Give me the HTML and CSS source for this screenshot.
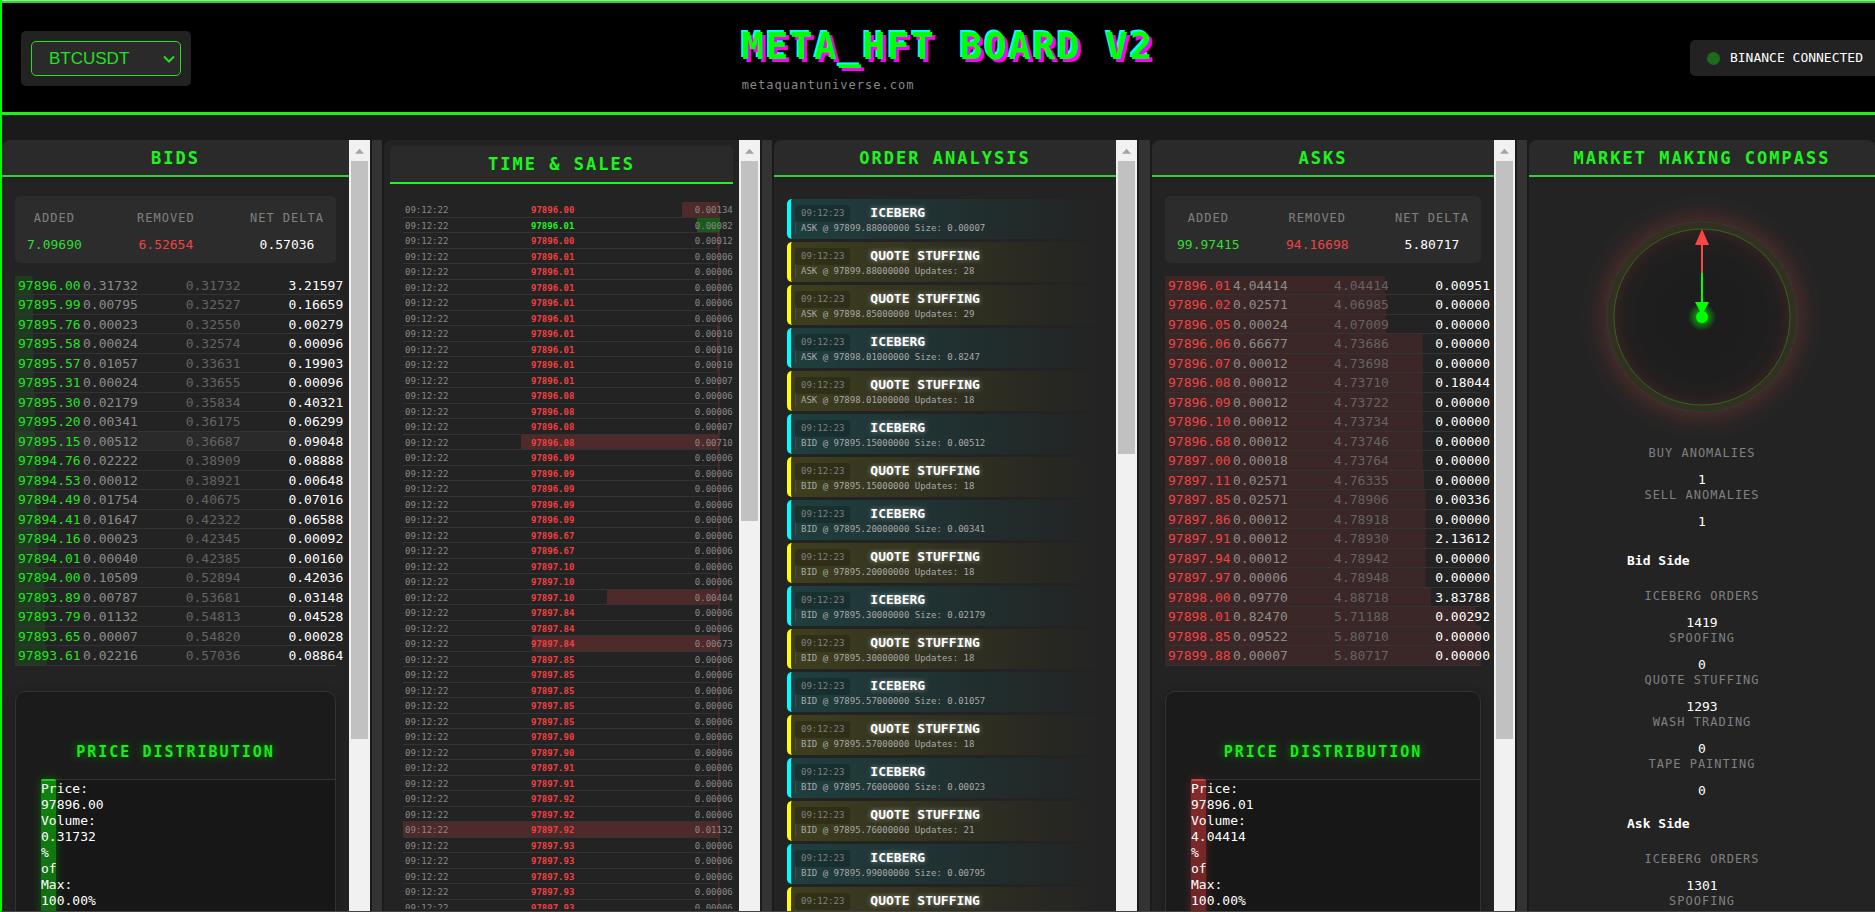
FILE: index.html
```html
<!DOCTYPE html>
<html lang="en">
<head>
<meta charset="utf-8">
<title>META_HFT BOARD V2</title>
<link rel="stylesheet" href="styles.css">
</head>
<body>
<header class="topbar">
  <div class="symbol-box">
    <div class="symbol-field">
      <select class="symbol-select" aria-label="Trading pair">
        <option>BTCUSDT</option>
        <option>ETHUSDT</option>
      </select>
      <svg class="symbol-chevron" viewBox="0 0 12 8" aria-hidden="true"><path d="M1 1.5 6 6.5 11 1.5"/></svg>
    </div>
  </div>
  <div class="brand">
    <h1 class="brand-title">META_HFT BOARD V2</h1>
    <div class="brand-site">metaquantuniverse.com</div>
  </div>
  <div class="status"><span class="status-dot"></span>BINANCE CONNECTED</div>
</header>

<main class="board">
  <section class="panel">
    <div class="panel-body">
      <h2 class="panel-title">BIDS</h2>
      <div class="content">
        <div class="stats">
          <div class="stat"><div class="label">ADDED</div><div class="value up">7.09690</div></div>
          <div class="stat"><div class="label">REMOVED</div><div class="value down">6.52654</div></div>
          <div class="stat"><div class="label">NET DELTA</div><div class="value">0.57036</div></div>
        </div>
        <table class="book bids"><tbody id="bids"></tbody></table>
        <div class="dist">
          <h3 class="dist-title">PRICE DISTRIBUTION</h3>
          <div class="dist-chart"><div class="dist-bar bid-bar">Price: 97896.00 Volume: 0.31732 % of Max: 100.00%</div></div>
        </div>
      </div>
    </div>
    <div class="scroll"><div class="scroll-arrow"></div><div class="scroll-track"><div class="scroll-thumb thumb-book"></div></div></div>
  </section>
  <div class="divider"></div>

  <section class="panel">
    <div class="panel-body inset">
      <h2 class="panel-title">TIME &amp; SALES</h2>
      <div class="tape-wrap"><table class="tape"><tbody id="tape"></tbody></table></div>
    </div>
    <div class="scroll"><div class="scroll-arrow"></div><div class="scroll-track"><div class="scroll-thumb thumb-tape"></div></div></div>
  </section>
  <div class="divider"></div>

  <section class="panel">
    <div class="panel-body">
      <h2 class="panel-title">ORDER ANALYSIS</h2>
      <div class="alerts" id="alerts"></div>
    </div>
    <div class="scroll"><div class="scroll-arrow"></div><div class="scroll-track"><div class="scroll-thumb thumb-alerts"></div></div></div>
  </section>
  <div class="divider"></div>

  <section class="panel">
    <div class="panel-body">
      <h2 class="panel-title">ASKS</h2>
      <div class="content">
        <div class="stats">
          <div class="stat"><div class="label">ADDED</div><div class="value up">99.97415</div></div>
          <div class="stat"><div class="label">REMOVED</div><div class="value down">94.16698</div></div>
          <div class="stat"><div class="label">NET DELTA</div><div class="value">5.80717</div></div>
        </div>
        <table class="book asks"><tbody id="asks"></tbody></table>
        <div class="dist">
          <h3 class="dist-title">PRICE DISTRIBUTION</h3>
          <div class="dist-chart"><div class="dist-bar ask-bar">Price: 97896.01 Volume: 4.04414 % of Max: 100.00%</div></div>
        </div>
      </div>
    </div>
    <div class="scroll"><div class="scroll-arrow"></div><div class="scroll-track"><div class="scroll-thumb thumb-book"></div></div></div>
  </section>
  <div class="divider"></div>

  <section class="panel">
    <div class="panel-body">
      <h2 class="panel-title">MARKET MAKING COMPASS</h2>
      <svg class="compass" viewBox="0 0 252 252" aria-hidden="true">
        <defs>
          <radialGradient id="glow" gradientUnits="userSpaceOnUse" cx="126" cy="126" r="125">
            <stop offset="0" stop-color="#1c1c1c"/>
            <stop offset=".48" stop-color="#1e1e1e"/>
            <stop offset=".62" stop-color="#231f1f"/>
            <stop offset=".7" stop-color="#322221"/>
            <stop offset=".705" stop-color="#34301f"/>
            <stop offset=".755" stop-color="#34301f"/>
            <stop offset=".76" stop-color="#422a29"/>
            <stop offset=".82" stop-color="#352726"/>
            <stop offset=".9" stop-color="#282424"/>
            <stop offset="1" stop-color="#232323"/>
          </radialGradient>
          <radialGradient id="hub"><stop offset=".4" stop-color="#00ff00" stop-opacity=".5"/><stop offset="1" stop-color="#00ff00" stop-opacity="0"/></radialGradient>
        </defs>
        <circle cx="126" cy="126" r="125" fill="url(#glow)"/>
        <circle cx="126" cy="126" r="95" fill="none" stroke="#2b3d33"/>
        <circle cx="126" cy="126" r="88" fill="none" stroke="#256a22"/>
        <circle cx="126" cy="126" r="14" fill="url(#hub)"/>
        <path d="M126 54V82" stroke="#ff4444" stroke-width="2"/>
        <path d="M126 38 133 54H119Z" fill="#ff4444"/>
        <path d="M126 82V112" stroke="#00ff00" stroke-width="2"/>
        <path d="M119 111H133L126 124Z" fill="#00ff00"/>
        <circle cx="126" cy="126" r="6" fill="#00ff00"/>
      </svg>
      <div class="metrics">
        <div class="metric"><div class="label">BUY ANOMALIES</div><div class="value">1</div></div>
        <div class="metric"><div class="label">SELL ANOMALIES</div><div class="value">1</div></div>
        <div class="side-group">
          <h4 class="side-title">Bid Side</h4>
          <div class="metric"><div class="label">ICEBERG ORDERS</div><div class="value">1419</div></div>
          <div class="metric"><div class="label">SPOOFING</div><div class="value">0</div></div>
          <div class="metric"><div class="label">QUOTE STUFFING</div><div class="value">1293</div></div>
          <div class="metric"><div class="label">WASH TRADING</div><div class="value">0</div></div>
          <div class="metric"><div class="label">TAPE PAINTING</div><div class="value">0</div></div>
          <h4 class="side-title">Ask Side</h4>
          <div class="metric"><div class="label">ICEBERG ORDERS</div><div class="value">1301</div></div>
          <div class="metric"><div class="label">SPOOFING</div></div>
        </div>
      </div>
    </div>
  </section>
</main>
<script src="board.js"></script>
</body>
</html>
```

FILE: styles.css
```css
* { box-sizing: border-box; margin: 0; padding: 0; }

:root {
  --green: #00ff00;
  --red: #ff4444;
  --line: #333333;
}

body {
  display: flex;
  flex-direction: column;
  height: 100vh;
  overflow: hidden;
  border-left: 2px solid var(--green);
  border-bottom: 1px solid #444448;
  background: #1a1a1a;
  color: #ffffff;
  font: 13px/16px "DejaVu Sans Mono", monospace;
}

/* Top bar */
.topbar {
  display: grid;
  grid-template-columns: 1fr auto 1fr;
  align-items: center;
  flex: none;
  padding: 22px 0 19px 19px;
  background: #000000;
  border-top: 1px solid #90f090;
  border-bottom: 3px solid #1fee1f;
  box-shadow: inset 0 2px 0 #35d035;
}

.symbol-box {
  justify-self: start;
  padding: 10px;
  background: #222222;
  border-radius: 5px;
}

.symbol-field { position: relative; }

.symbol-select {
  display: block;
  width: 150px;
  height: 35px;
  padding: 0 17px;
  appearance: none;
  background: #2a2a2a;
  border: 1px solid #22e022;
  border-radius: 5px;
  color: #22e022;
  font: 17px "Liberation Sans", Arial, sans-serif;
}

.symbol-chevron {
  position: absolute;
  right: 6px;
  top: 14px;
  width: 12px;
  height: 8px;
  fill: none;
  stroke: #22e022;
  stroke-width: 2;
  pointer-events: none;
}

.brand-title {
  color: var(--green);
  font-size: 37px;
  line-height: 48px;
  letter-spacing: 2px;
  text-shadow: 3px 3px #ff00ff, -2px -2px #00ffff;
}

.brand-site {
  padding-top: 6px;
  color: #888888;
  font-size: 12px;
  letter-spacing: 1px;
}

.status {
  display: flex;
  align-items: center;
  gap: 10px;
  justify-self: end;
  height: 36px;
  padding: 0 12px 0 17px;
  background: #222222;
  border-radius: 5px 0 0 5px;
}

.status-dot {
  width: 13px;
  height: 13px;
  border-radius: 50%;
  background: #1b6b1b;
}

/* Board */
.board {
  display: grid;
  grid-template-columns:
    minmax(0, 368fr) 10px minmax(0, 376fr) 10px minmax(0, 363fr)
    11px minmax(0, 363fr) 10px minmax(0, 346fr);
  column-gap: 2px;
  flex: 1;
  min-height: 0;
  padding-top: 25px;
}

.divider { background: var(--line); }

.panel {
  display: flex;
  min-height: 0;
  overflow: hidden;
  background: #232323;
  border-radius: 8px 8px 0 0;
}

.panel:has(.scroll) { border-top-right-radius: 0; }

.panel-body { flex: 1; min-width: 0; min-height: 0; }

.panel-title {
  padding-top: 1px;
  background: #2a2a2a;
  border-bottom: 2px solid #38cc38;
  color: #1df51d;
  font-size: 17px;
  line-height: 34px;
  letter-spacing: 2px;
  text-align: center;
}

.inset {
  display: flex;
  flex-direction: column;
  padding: 6px 6px 2px;
}

.inset .panel-title {
  padding-top: 0;
  line-height: 36px;
  border-bottom-color: #1df51d;
  border-radius: 5px 5px 0 0;
}

.content { padding: 19px 13px 0; }

/* Scrollbars */
.scroll {
  display: flex;
  flex-direction: column;
  flex: none;
  width: 21px;
  padding: 0 2px;
  background: #f1f1f1;
}

.scroll-arrow {
  flex: none;
  width: 9px;
  height: 21px;
  margin: 0 auto;
  background: #a3a3a3;
  clip-path: polygon(50% 42%, 100% 66%, 0 66%);
}

.scroll-track { flex: 1; }
.scroll-thumb { background: #c1c1c1; }
.thumb-book { height: 77%; }
.thumb-tape { height: 48%; }
.thumb-alerts { height: 39%; }

/* Labelled numbers */
.label {
  margin-bottom: 10px;
  color: #808080;
  font-size: 12px;
  line-height: 17px;
  letter-spacing: 1px;
}

.value { line-height: 15px; }
.up { color: #33dd33; }
.down { color: #ee4444; }

.stats {
  display: flex;
  justify-content: space-between;
  padding: 14px 12px 11px;
  background: #2c2c2c;
  border-radius: 5px;
  text-align: center;
}

/* Order book */
.book, .book tbody { display: block; }
.book { margin-top: 13px; }
.book tbody { display: grid; grid-auto-rows: 19px 20px; }

.book tr {
  display: grid;
  grid-template-columns: 68px 32% 32% auto;
  border-bottom: 1px solid var(--line);
  background-repeat: no-repeat;
  background-size: var(--fill) 100%;
  line-height: 19px;
  white-space: nowrap;
}

.book td:first-child { padding-left: 3px; }
.book td:nth-child(2) { color: #8c8c8c; }
.book td:nth-child(3) { color: #646464; }
.bids td:first-child { color: #25e225; }
.asks td:first-child { color: #ee4444; }
.bids tr { background-image: linear-gradient(#00ff001c, #00ff001c); }
.asks tr { background-image: linear-gradient(#ff44441c, #ff44441c); }
.book .active { background-color: #2a2a2a; }

/* Price distribution */
.dist {
  height: 420px;
  margin-top: 25px;
  padding-top: 50px;
  background: #1b1b1b;
  border: 1px solid var(--line);
  border-radius: 10px;
  box-shadow: 0 4px 12px #00000044;
}

.dist-title {
  color: #14f014;
  font-size: 15px;
  line-height: 20px;
  letter-spacing: 2px;
  text-align: center;
  text-shadow: 0 0 10px #00ff0080;
}

.dist-chart {
  height: 320px;
  margin: 17px 0 0 25px;
  background: #171717;
  border-top: 1px solid var(--line);
}

.dist-bar {
  width: 15px;
  height: 300px;
  margin-top: -1px;
  border-top: 2px solid;
  border-radius: 2px 2px 0 0;
}

.bid-bar {
  background: linear-gradient(#0d860d, #1a4a1a);
  border-color: #22cc22;
  box-shadow: 0 0 10px #00ff0044;
}

.ask-bar {
  background: linear-gradient(#862a2a, #4a2020);
  border-color: #cc4040;
  box-shadow: 0 0 10px #ff444444;
}

/* Time and sales */
.tape-wrap {
  flex: 1;
  min-height: 0;
  overflow: hidden;
  padding: 18px 0 0 13px;
}

.tape, .tape tbody { display: block; }
.tape tbody { display: grid; grid-auto-rows: 16px 15px; margin-right: 13px; }

.tape tr {
  display: grid;
  grid-template-columns: 40% 52% auto;
  padding-left: 2px;
  border-bottom: 1px solid var(--line);
  background-image: linear-gradient(#ff444433, #ff444433);
  background-position: right top;
  background-repeat: no-repeat;
  background-size: var(--fill) 100%;
  color: #888888;
  font-size: 9px;
  line-height: 16px;
  white-space: nowrap;
}

.tape td:nth-child(2) { color: #f04040; font-weight: bold; }
.tape .buy { background-image: linear-gradient(#00ff0040, #00ff0040); }
.tape .buy td:nth-child(2) { color: #1df51d; }

/* Order analysis */
.alerts {
  display: grid;
  gap: 3px;
  padding: 22px 13px 0;
}

.alert {
  height: 40px;
  padding: 6px 4px 5px;
  border-left: 4px solid;
  border-radius: 5px;
}

.iceberg { border-color: #00ffff; background: linear-gradient(90deg, #00ffff20, #00ffff00); }
.stuffing { border-color: #ffff00; background: linear-gradient(90deg, #ffff0020, #ffff0000); }

.alert-head {
  display: flex;
  align-items: center;
  gap: 20px;
  height: 17px;
}

.alert-time {
  padding: 0 6px;
  background: #00000033;
  border-radius: 3px;
  color: #808080;
  font-size: 9px;
  line-height: 17px;
}

.alert-type { line-height: 14px; padding-bottom: 2px; text-shadow: 0 0 5px #ffffff80; }

.alert-detail {
  padding-left: 5px;
  border-left: 1px solid #ffffff1a;
  color: #a8a8a8;
  font-size: 9px;
  line-height: 12px;
}

/* Compass */
.compass {
  display: block;
  width: 252px;
  height: 252px;
  margin: 14px auto 0;
}

.metrics {
  width: 150px;
  margin: 0 auto;
  padding-top: 2px;
  text-align: center;
  white-space: nowrap;
}

.side-group { padding-top: 6px; }
.side-title { margin: 18px 0 19px; font-size: 13px; line-height: 16px; text-align: left; }
```

FILE: board.js
```js
const bids = `97896.00 0.31732 0.31732 3.21597
97895.99 0.00795 0.32527 0.16659
97895.76 0.00023 0.32550 0.00279
97895.58 0.00024 0.32574 0.00096
97895.57 0.01057 0.33631 0.19903
97895.31 0.00024 0.33655 0.00096
97895.30 0.02179 0.35834 0.40321
97895.20 0.00341 0.36175 0.06299
97895.15 0.00512 0.36687 0.09048
97894.76 0.02222 0.38909 0.08888
97894.53 0.00012 0.38921 0.00648
97894.49 0.01754 0.40675 0.07016
97894.41 0.01647 0.42322 0.06588
97894.16 0.00023 0.42345 0.00092
97894.01 0.00040 0.42385 0.00160
97894.00 0.10509 0.52894 0.42036
97893.89 0.00787 0.53681 0.03148
97893.79 0.01132 0.54813 0.04528
97893.65 0.00007 0.54820 0.00028
97893.61 0.02216 0.57036 0.08864`;

const asks = `97896.01 4.04414 4.04414 0.00951
97896.02 0.02571 4.06985 0.00000
97896.05 0.00024 4.07009 0.00000
97896.06 0.66677 4.73686 0.00000
97896.07 0.00012 4.73698 0.00000
97896.08 0.00012 4.73710 0.18044
97896.09 0.00012 4.73722 0.00000
97896.10 0.00012 4.73734 0.00000
97896.68 0.00012 4.73746 0.00000
97897.00 0.00018 4.73764 0.00000
97897.11 0.02571 4.76335 0.00000
97897.85 0.02571 4.78906 0.00336
97897.86 0.00012 4.78918 0.00000
97897.91 0.00012 4.78930 2.13612
97897.94 0.00012 4.78942 0.00000
97897.97 0.00006 4.78948 0.00000
97898.00 0.09770 4.88718 3.83788
97898.01 0.82470 5.71188 0.00292
97898.85 0.09522 5.80710 0.00000
97899.88 0.00007 5.80717 0.00000`;

// price, size, number of consecutive prints
const prints = [
  ["97896.00", "0.00134", 1], ["97896.01", "0.00082", 1, "buy"], ["97896.00", "0.00012", 1],
  ["97896.01", "0.00006", 5], ["97896.01", "0.00010", 3], ["97896.01", "0.00007", 1],
  ["97896.08", "0.00006", 2], ["97896.08", "0.00007", 1], ["97896.08", "0.00710", 1],
  ["97896.09", "0.00006", 5], ["97896.67", "0.00006", 2], ["97897.10", "0.00006", 2],
  ["97897.10", "0.00404", 1], ["97897.84", "0.00006", 2], ["97897.84", "0.00673", 1],
  ["97897.85", "0.00006", 5], ["97897.90", "0.00006", 2], ["97897.91", "0.00006", 2],
  ["97897.92", "0.00006", 2], ["97897.92", "0.01132", 1], ["97897.93", "0.00006", 5]
];

const alerts = [
  ["ASK", "97899.88", "Size: 0.00007"], ["ASK", "97899.88", "Updates: 28"],
  ["ASK", "97898.85", "Updates: 29"], ["ASK", "97898.01", "Size: 0.8247"],
  ["ASK", "97898.01", "Updates: 18"], ["BID", "97895.15", "Size: 0.00512"],
  ["BID", "97895.15", "Updates: 18"], ["BID", "97895.20", "Size: 0.00341"],
  ["BID", "97895.20", "Updates: 18"], ["BID", "97895.30", "Size: 0.02179"],
  ["BID", "97895.30", "Updates: 18"], ["BID", "97895.57", "Size: 0.01057"],
  ["BID", "97895.57", "Updates: 18"], ["BID", "97895.76", "Size: 0.00023"],
  ["BID", "97895.76", "Updates: 21"], ["BID", "97895.99", "Size: 0.00795"],
  ["BID", "97895.99", "Updates: 18"]
];

const MAX_DEPTH = 5.80717;
const MAX_PRINT = 0.01132;

const row = (cells, share, cls = "") =>
  `<tr class="${cls}" style="--fill:${(share * 100).toFixed(2)}%">` +
  cells.map(c => `<td>${c}</td>`).join("") + "</tr>";

const book = (text, activePrice) => text.split("\n").map(line => {
  const cells = line.split(" ");
  return row(cells, cells[2] / MAX_DEPTH, cells[0] === activePrice ? "active" : "");
}).join("");

document.getElementById("bids").innerHTML = book(bids, "97895.15");
document.getElementById("asks").innerHTML = book(asks);

document.getElementById("tape").innerHTML = prints.map(([price, size, count, side]) =>
  row(["09:12:22", price, size], size / MAX_PRINT, side).repeat(count)).join("");

document.getElementById("alerts").innerHTML = alerts.map(([side, price, note]) => {
  const iceberg = note.startsWith("Size");
  return `<article class="alert ${iceberg ? "iceberg" : "stuffing"}">
    <div class="alert-head"><time class="alert-time">09:12:23</time>
    <strong class="alert-type">${iceberg ? "ICEBERG" : "QUOTE STUFFING"}</strong></div>
    <div class="alert-detail">${side} @ ${price}000000 ${note}</div></article>`;
}).join("");
```
